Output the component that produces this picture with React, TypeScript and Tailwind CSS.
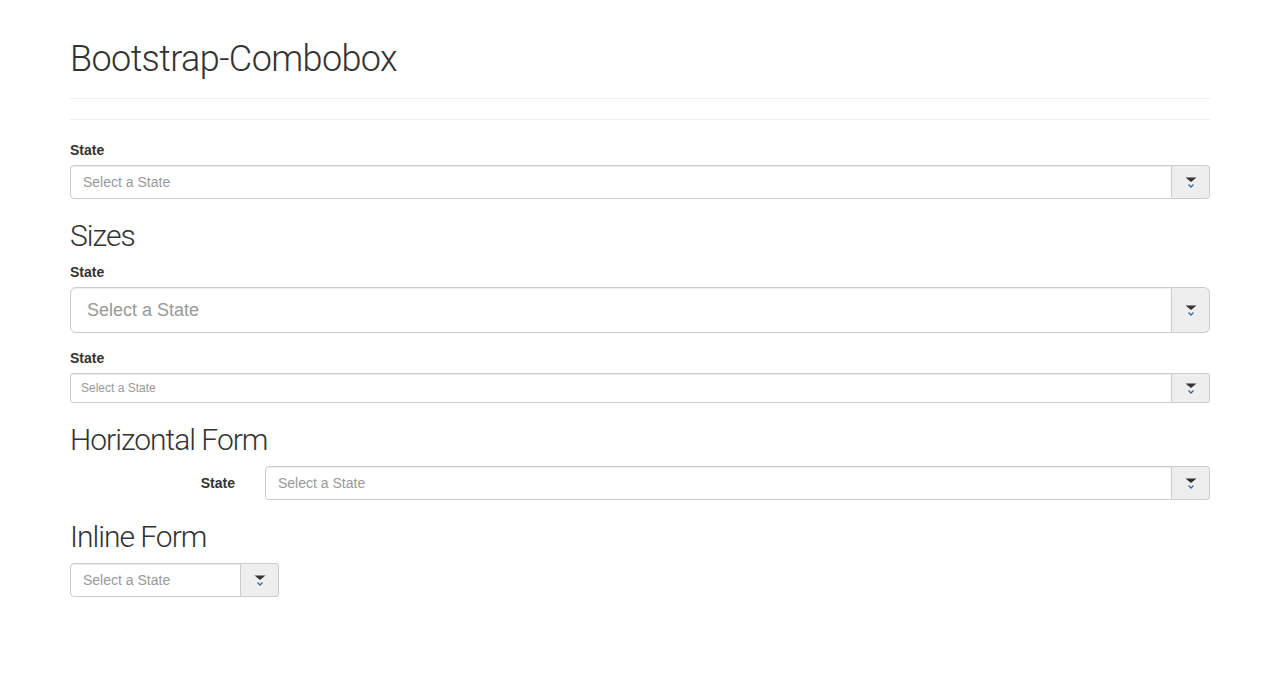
import React from 'react';

const Caret: React.FC = () => (
  <svg width="12" height="14" viewBox="0 0 12 14" className="mt-[2px] block">
    <path d="M0.5 1.5 H11.5 L6 6 Z" fill="#333" />
    <path d="M3.5 8.5 L6 11 L8.5 8.5" fill="none" stroke="#3a6a9a" strokeWidth="1.3" />
  </svg>
);

type Size = 'md' | 'lg' | 'sm';

const Combobox: React.FC<{ size?: Size; className?: string }> = ({ size = 'md', className = '' }) => {
  const input =
    size === 'lg'
      ? 'h-[46px] px-4 text-[18px] rounded-l-[6px]'
      : size === 'sm'
      ? 'h-[30px] px-[10px] text-[12px] rounded-l-[3px]'
      : 'h-[34px] px-3 text-[14px] rounded-l-[4px]';
  const btn =
    size === 'lg' ? 'rounded-r-[6px]' : size === 'sm' ? 'rounded-r-[3px]' : 'rounded-r-[4px]';
  return (
    <div className={`flex ${className}`}>
      <input
        className={`flex-1 min-w-0 border border-[#ccc] bg-white text-[#555] placeholder:text-[#999] shadow-[inset_0_1px_1px_rgba(0,0,0,0.075)] outline-none ${input}`}
        placeholder="Select a State"
      />
      <span
        className={`w-[38px] flex items-center justify-center border border-l-0 border-[#ccc] bg-[#eee] ${btn}`}
      >
        <Caret />
      </span>
    </div>
  );
};

const Label: React.FC<{ className?: string }> = ({ className = '' }) => (
  <label className={`block text-[14px] font-bold leading-5 text-[#333] ${className}`}>State</label>
);

const heading = "font-['Roboto',sans-serif] font-light text-[#333]";
const h2 = `${heading} mt-5 mb-[10px] text-[30px] leading-[33px] tracking-[-1px]`;

export default function App() {
  return (
    <div className="min-h-screen bg-white font-['Liberation_Sans',Arial,sans-serif] text-[14px] leading-5 text-[#333]">
      <div className="mx-auto w-[1170px] px-[15px] pt-10 pb-20">
        <div className="border-b border-[#eee] pb-[9px]">
          <h1 className={`${heading} mb-[10px] text-[36px] leading-[39px] tracking-[-0.6px]`}>
            Bootstrap-Combobox
          </h1>
        </div>
        <hr className="mt-5 mb-5 border-t border-[#eee]" />

        <div className="mb-[15px]">
          <Label className="mb-[5px]" />
          <Combobox />
        </div>

        <h2 className={h2}>Sizes</h2>
        <div className="mb-[15px]">
          <Label className="mb-[5px]" />
          <Combobox size="lg" />
        </div>
        <div className="mb-[15px]">
          <Label className="mb-[5px]" />
          <Combobox size="sm" />
        </div>

        <h2 className={h2}>Horizontal Form</h2>
        <div className="mb-[15px] flex">
          <div className="w-[165px] pt-[7px] text-right">
            <Label />
          </div>
          <Combobox className="ml-[30px] flex-1" />
        </div>

        <h2 className={h2}>Inline Form</h2>
        <Combobox className="w-[209px]" />
      </div>
    </div>
  );
}
